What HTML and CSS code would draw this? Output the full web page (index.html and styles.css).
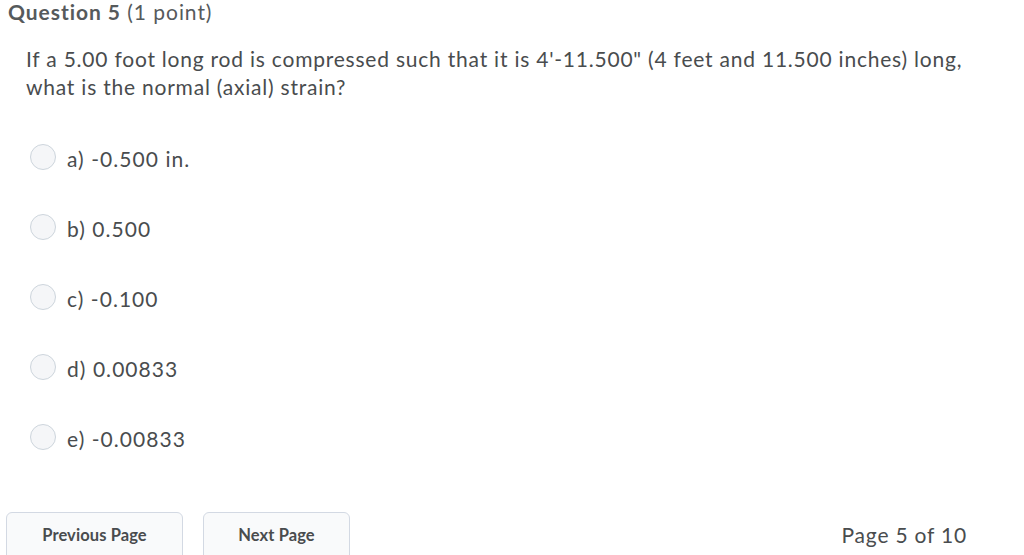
FILE: index.html
```html
<!DOCTYPE html>
<html lang="en">
<head>
<meta charset="utf-8">
<title>Question 5</title>
<link rel="stylesheet" href="styles.css">
</head>
<body>
<div class="page">
  <h2 class="q-title"><span class="q-num">Question 5</span> (1 point)</h2>
  <p class="q-text">If a 5.00 foot long rod is compressed such that it is 4'-11.500" (4 feet and 11.500 inches) long, what is the normal (axial) strain?</p>
  <div class="options">
    <label class="opt"><span class="radio"></span><span class="opt-text">a) -0.500 in.</span></label>
    <label class="opt"><span class="radio"></span><span class="opt-text">b) 0.500</span></label>
    <label class="opt"><span class="radio"></span><span class="opt-text">c) -0.100</span></label>
    <label class="opt"><span class="radio"></span><span class="opt-text">d) 0.00833</span></label>
    <label class="opt"><span class="radio"></span><span class="opt-text">e) -0.00833</span></label>
  </div>
  <div class="footer">
    <div class="btns">
      <button class="btn btn-prev">Previous Page</button>
      <button class="btn btn-next">Next Page</button>
    </div>
    <div class="pager">Page 5 of 10</div>
  </div>
</div>
</body>
</html>
```
FILE: styles.css
```css
html, body {
  margin: 0;
  padding: 0;
  background: #ffffff;
}
body {
  font-family: Lato, "Open Sans", sans-serif;
  color: #494c4e;
  overflow: hidden;
}
.page {
  width: 1024px;
  height: 555px;
}
.q-title {
  margin: 0;
  padding: 0 0 0 8px;
  font-size: 21px;
  letter-spacing: 0.95px;
  font-weight: 400;
  line-height: 24px;
  color: #565a5c;
}
.q-num {
  font-weight: 700;
}
.q-text {
  margin: 21px 0 0 26px;
  width: 960px;
  font-size: 21px;
  letter-spacing: 0.78px;
  line-height: 28px;
}
.options {
  display: flex;
  flex-direction: column;
  gap: 44px;
  margin: 43px 0 0 30px;
}
.opt {
  display: flex;
  align-items: flex-start;
  height: 26px;
  gap: 11px;
}
.radio {
  box-sizing: border-box;
  width: 26px;
  height: 26px;
  border-radius: 50%;
  border: 1px solid #cdd5dc;
  background: #f5f6f8;
}
.opt-text {
  margin-top: 3px;
  font-size: 21px;
  letter-spacing: 1.05px;
  line-height: 24px;
}
.footer {
  display: flex;
  justify-content: space-between;
  align-items: flex-start;
  margin-top: 62px;
  padding: 0 57px 0 6px;
}
.btns {
  display: flex;
  gap: 20px;
}
.btn {
  box-sizing: border-box;
  height: 56px;
  border: 1px solid #d3d9e3;
  border-radius: 6px;
  background: #f9fafb;
  font-family: Lato, sans-serif;
  font-weight: 700;
  font-size: 16.5px;
  letter-spacing: 0.1px;
  line-height: 20px;
  color: #494c4e;
  padding: 12px 0 0;
  display: flex;
  justify-content: center;
  align-items: flex-start;
}
.btn-prev { width: 177px; }
.btn-next { width: 147px; }
.pager {
  margin-top: 11px;
  font-size: 21px;
  letter-spacing: 0.8px;
  line-height: 24px;
}
```
